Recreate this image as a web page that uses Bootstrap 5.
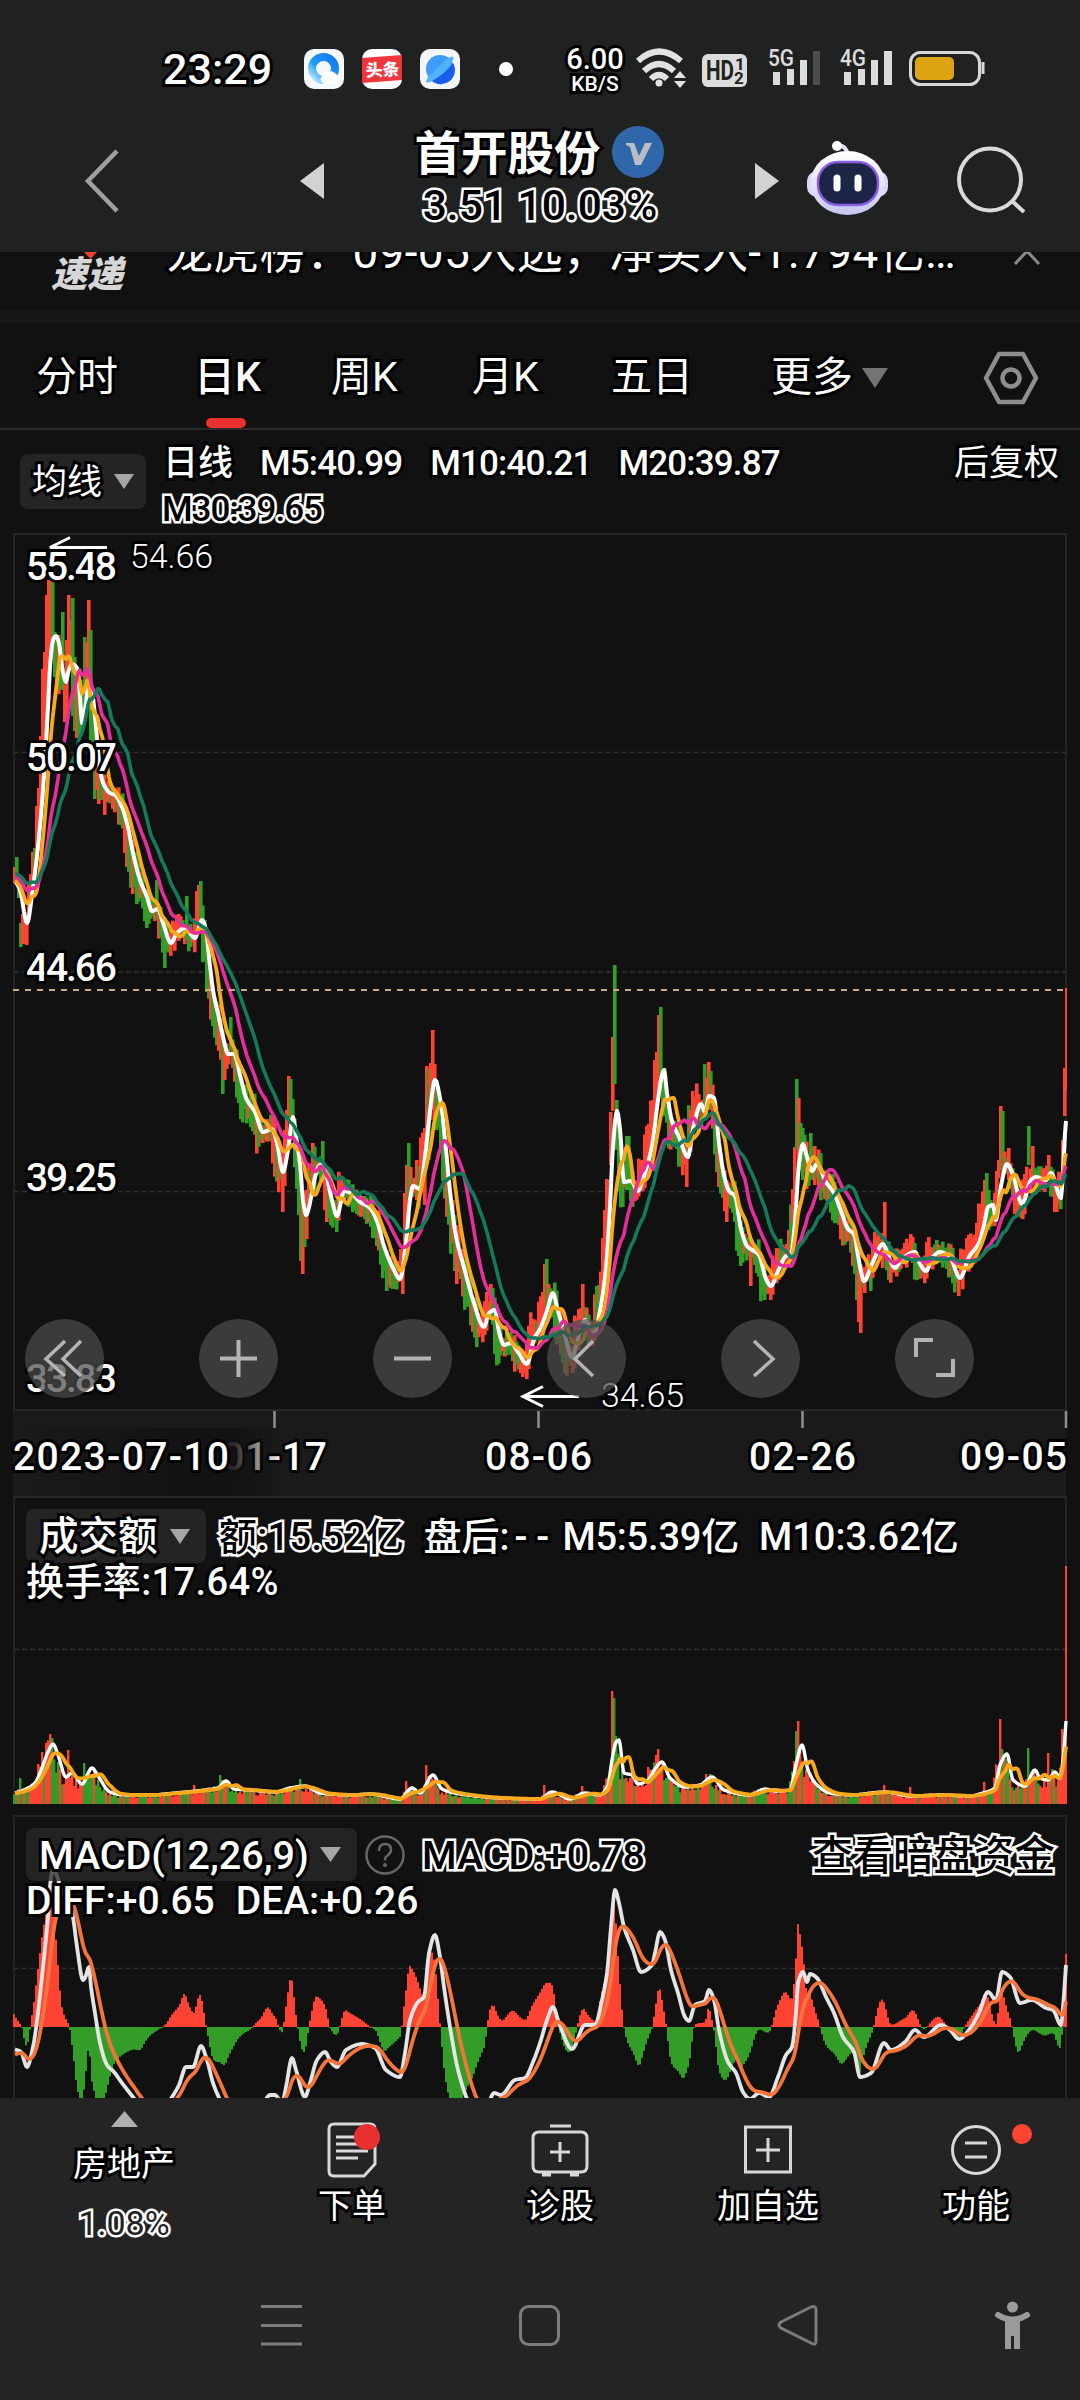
<!DOCTYPE html>
<html lang="zh-CN">
<head>
  <meta charset="UTF-8" />
  <title>首开股份 日K</title>
  <meta name="viewport" content="width=device-width, initial-scale=1" />
  <link href="https://cdn.jsdelivr.net/npm/bootstrap@5.3.0/dist/css/bootstrap.min.css" rel="stylesheet" />
  <style>
    body {
      width: 1080px;
      height: 2400px;
      overflow: hidden;
      background: #111;
      color: #fff;
      font-family: Roboto, "Noto Sans CJK SC", sans-serif;
      font-weight: 500;
      line-height: 1;
      white-space: nowrap;
    }
    svg { display: block; flex: none; }

    /* white text with black rim, and the inverted version */
    .ink { color: #fff; -webkit-text-stroke: 6px #000; paint-order: stroke fill; }
    .ghost { color: #000; -webkit-text-stroke: 5px #fff; paint-order: stroke fill; }
    svg .ink { fill: #fff; stroke: #000; stroke-width: 6px; stroke-linejoin: round; -webkit-text-stroke: 0; }

    .topbar { height: 252px; background: #202221; }
    .statusbar { height: 120px; padding: 18px 0 0 163px; }
    .clock { font-size: 43px; width: 141px; }
    .speed { width: 68px; text-align: center; font-size: 29px; margin: 1px 0 0 48px; }
    .speed small { display: block; font-size: 21px; line-height: 20px; }
    .titlebar { height: 132px; }
    .stock-name { font-size: 46.5px; font-weight: 700; }
    .stock-quote { font-size: 42.5px; }

    .news { height: 58px; background: #111; overflow: hidden; }
    .news-logo { width: 80px; margin-left: 51px; font-size: 36px; font-weight: 900; font-style: italic; color: #d6d6d6; padding-top: 5px; }
    .news-text { font-size: 46px; letter-spacing: .35px; font-weight: 400; width: 808px; margin: -23px 0 0 36px; }
    .divider-band { height: 13px; background: #171717; }

    .tabs { height: 107px; display: grid; grid-template-columns: 158px 137px 141px 139px 160px 211px 100px; padding-left: 36px; border-bottom: 2px solid #2b2b2b; font-size: 41px; font-weight: 400; }
    .tabs > div { position: relative; display: flex; align-items: center; padding-top: 4px; }
    .tabs .on { font-weight: 500; }
    .tabs .on::after { content: ""; position: absolute; left: 12px; bottom: 0; width: 40px; height: 10px; border-radius: 5px; background: #e83030; }

    .chip { background: #242424; border-radius: 8px; height: 54px; gap: 12px; }
    .chip > span { padding-top: 2px; }
    .ma-row { height: 102px; padding: 10px 20px 0; font-size: 35px; }
    .legend-layer { font-size: 38px; }
    .lt { letter-spacing: -.85px; }

    .round-tools { left: 25px; top: 787px; gap: 95px; }
    .round-tools > div { width: 79px; height: 79px; border-radius: 50%; background: rgba(76, 76, 76, .72); }

    .bottom-area { height: 302px; background: #242424; }
    .menu-row { height: 182px; display: grid; grid-template-columns: 248px 208px 208px 208px 208px; font-size: 34px; font-weight: 400; }
    .menu-row > div { position: relative; display: flex; flex-direction: column; align-items: center; }
    .reddot { position: absolute; border-radius: 50%; background: #e83030; }
    .sysnav { height: 120px; padding-left: 261px; }
  </style>
</head>
<body>
  <header class="topbar">
    <div class="statusbar d-flex align-items-center">
      <div class="clock ink">23:29</div>
      <div class="d-flex" style="gap: 18px">
        <svg width="40" height="40" viewBox="0 0 40 40">
          <defs><linearGradient id="ring" x1="1" y1="0" x2="0" y2="1"><stop offset="0" stop-color="#1478f0"/><stop offset=".6" stop-color="#1f9cf5"/><stop offset="1" stop-color="#c6ecff"/></linearGradient></defs>
          <rect width="40" height="40" rx="10" fill="#f4f8ff"/>
          <circle cx="19.500" cy="19.500" r="11.500" fill="none" stroke="url(#ring)" stroke-width="8"/>
          <path d="M20 35a5 5 0 0 1-1-9 8 8 0 0 1 13-1 5.500 5.500 0 0 1 0 10z" fill="#fff"/>
        </svg>
        <svg width="40" height="40" viewBox="0 0 40 40">
          <rect width="40" height="40" rx="10" fill="#fff"/>
          <path d="M0 9 40 6V31L0 34z" fill="#f0363c"/>
          <text x="3.500" y="27" font-size="17" font-weight="900" fill="#fff" transform="rotate(-3 20 20)">头条</text>
        </svg>
        <svg width="40" height="40" viewBox="0 0 40 40">
          <rect width="40" height="40" rx="10" fill="#f3f5f8"/>
          <circle cx="20" cy="20" r="14" fill="#3d9cf9"/>
          <path d="M11 31C22 27 31 18 33 14a14 14 0 0 1-22 17z" fill="#1a5cec"/>
          <path d="M28 9Q35 5 33 11 28 22 17 29 8 35 6 33L8 28z" fill="#52b2fb"/>
        </svg>
      </div>
      <svg width="14" height="14" style="margin-left: 39px"><circle cx="7" cy="7" r="7" fill="#fff"/></svg>
      <div class="speed ink">6.00<small>KB/S</small></div>
      <!-- wifi, HD, signals, battery -->
      <svg width="360" height="50" viewBox="633 44 360 50" style="margin-left: 3px">
        <g fill="none" stroke="#e2e2e2" stroke-width="6">
          <path d="M639 61Q660 42 682 61M645 71Q660 57 675 71M652 79Q660 71 668 79"/>
        </g>
        <circle cx="660" cy="83" r="3.500" fill="#e2e2e2"/>
        <path d="M675 78l6-7 6 7zM675 81l6 7 6-7z" fill="#e2e2e2"/>
        <rect x="703" y="54" width="45" height="33" rx="6" fill="#dcdcdc"/>
        <g fill="#202221" font-weight="700">
          <text x="707" y="80" font-size="27" textLength="28" lengthAdjust="spacingAndGlyphs">HD</text>
          <text x="736" y="70" font-size="17">1</text><text x="735" y="84" font-size="17">2</text>
        </g>
        <g fill="#dcdcdc" font-size="23" font-weight="500">
          <text x="769" y="66" textLength="26" lengthAdjust="spacingAndGlyphs">5G</text>
          <text x="841" y="66" textLength="26" lengthAdjust="spacingAndGlyphs">4G</text>
          <path d="M774 72h7v13h-7zM788 69h7v16h-7zM801 60h7v25h-7zM845 72h7v13h-7zM859 69h7v16h-7zM872 60h7v25h-7zM885 51h8v34h-8z"/>
          <path d="M814 51h7v34h-7z" fill="#4c4e4d"/>
        </g>
        <rect x="911.500" y="52.500" width="69" height="32" rx="10" fill="none" stroke="#d8d8d8" stroke-width="3"/>
        <rect x="916" y="57" width="39" height="23" rx="5" fill="#dea414"/>
        <path d="M984 62v12" stroke="#d8d8d8" stroke-width="3"/>
      </svg>
    </div>
    <div class="titlebar d-flex">
      <svg width="400" height="132" viewBox="0 120 400 132">
        <path d="M117 151 88 181 117 211" fill="none" stroke="#a0a0a0" stroke-width="4.500"/>
        <path d="M300 181 324 163V199z" fill="#d2d2d2"/>
      </svg>
      <div class="d-flex flex-column align-items-center" style="width: 280px">
        <div class="d-flex align-items-center" style="gap: 11px; margin-right: 2px; height: 64px">
          <span class="stock-name ink" style="padding-top: 5px">首开股份</span>
          <svg width="52" height="52" viewBox="0 0 52 52"><circle cx="26" cy="26" r="26" fill="#3067ab"/><path d="M14 17h8l5 13 6-13h7L29 39h-6l-5-18-4-2z" fill="#b9bec5"/></svg>
        </div>
        <div class="stock-quote ghost" style="margin-top: 1px">3.51 10.03%</div>
      </div>
      <svg width="400" height="132" viewBox="680 120 400 132">
        <defs>
          <linearGradient id="head" x1="0" y1="0" x2="0" y2="1"><stop offset="0" stop-color="#fff"/><stop offset=".6" stop-color="#e2defa"/><stop offset="1" stop-color="#c3c6f0"/></linearGradient>
        </defs>
        <path d="M755 163 779 181 755 199z" fill="#d2d2d2"/>
        <path d="M847 154q0-8-9-9" fill="none" stroke="#e8e6f8" stroke-width="4"/>
        <circle cx="837" cy="146" r="5" fill="#fff"/>
        <rect x="807" y="171" width="81" height="26" rx="10" fill="#dcdaf2"/>
        <ellipse cx="847.500" cy="183" rx="37" ry="32" fill="url(#head)"/>
        <rect x="818" y="162" width="60" height="43" rx="20" fill="#1d2547" stroke="#8a5fe6" stroke-width="2.500"/>
        <path d="M837 178v10M858 178v10" stroke="#fff" stroke-width="7" stroke-linecap="round"/>
        <circle cx="990" cy="179.500" r="31" fill="none" stroke="#dadada" stroke-width="4"/>
        <path d="M1012 201 1024 212" stroke="#dadada" stroke-width="4"/>
      </svg>
    </div>
  </header>

  <div class="news d-flex">
    <div class="position-relative">
      <div class="news-logo">速递</div>
      <svg class="position-absolute" style="left: 84px; top: 0" width="13" height="7"><path d="M0 0h13L6.500 7z" fill="#f0412f"/></svg>
    </div>
    <div class="news-text ink">龙虎榜：09-05入选，净买入-1.794亿…</div>
    <svg width="30" height="16" class="ms-auto" style="margin-right: 38px"><path d="M3 12 15 -1 27 12" fill="none" stroke="#8a8a8a" stroke-width="3"/></svg>
  </div>
  <div class="divider-band"></div>

  <nav class="tabs">
    <div class="ink">分时</div>
    <div class="ink on">日K</div>
    <div class="ink">周K</div>
    <div class="ink">月K</div>
    <div class="ink">五日</div>
    <div class="ink" style="gap: 9px">更多<svg width="26" height="20"><path d="M0 0h26L13 20z" fill="#747474"/></svg></div>
    <div><svg width="58" height="54" viewBox="0 0 56 54"><path d="M16 3H40L53 27 40 51H16L3 27z" fill="none" stroke="#8e8e8e" stroke-width="4.500" stroke-linejoin="round"/><circle cx="28" cy="27" r="8.500" fill="none" stroke="#8e8e8e" stroke-width="4.500"/></svg></div>
  </nav>

  <div class="ma-row d-flex">
    <div class="chip d-flex align-items-center justify-content-center ink fw-normal" style="width: 126px; height: 55px; margin-top: 14px"><span>均线</span><svg width="20" height="15"><path d="M0 0h20L10 15z" fill="#a6a6a6"/></svg></div>
    <div style="margin-left: 17px">
      <div class="d-flex align-items-center" style="height: 46px; gap: 27px">
        <span class="ink">日线</span><span class="ink lt">M5:40.99</span><span class="ink lt" style="margin-left: 1px">M10:40.21</span><span class="ink lt">M20:39.87</span>
      </div>
      <div class="ghost" style="margin: 6px 0 0 -1px; letter-spacing: -1px">M30:39.65</div>
    </div>
    <div class="ms-auto ink fw-normal" style="margin-top: 6px; margin-right: 1px">后复权</div>
  </div>

  <main class="position-relative">
    <!-- the drawing keeps screen coordinates; it starts at y=532 -->
    <svg id="chart" width="1080" height="1566" viewBox="0 532 1080 1566">
      <defs>
        <linearGradient id="fade"><stop offset="0" stop-color="#1a1a1a"/><stop offset=".7" stop-color="#121212"/><stop offset=".82" stop-color="#121212" stop-opacity=".9"/><stop offset="1" stop-color="#121212" stop-opacity="0"/></linearGradient>
      </defs>
      <g fill="none" stroke="#242424" stroke-width="2">
        <path d="M14 1410V534H1066V1410z"/>
        <path d="M14 1497V1804M1066 1497V1804M14 2098V1816H1066V2098"/>
      </g>
      <g stroke="#303030" stroke-width="1.300" stroke-dasharray="5 3">
        <path d="M14 752.500H1066M14 972H1066M14 1191.500H1066M14 1649.500H1066M14 1968.500H1066"/>
      </g>
      <g id="candles"></g>
      <g id="averages"></g>
      <path d="M13 990H1066" stroke="#c8aa7d" stroke-width="2" stroke-dasharray="6 6"/>
      <g id="volume"></g>
      <g id="macd"></g>

      <rect x="13" y="1411" width="1053" height="85" fill="#1a1a1a"/>
      <path d="M13 1410H1067M13 1497H1067" stroke="#262626" stroke-width="2"/>
      <path d="M274.500 1411v17M538.500 1411v17M802.500 1411v17M1066 1411v17" stroke="#8e8e8e" stroke-width="2.500"/>
      <g font-size="39" class="ink">
        <text x="222" y="1470" textLength="105">01-17</text>
        <rect x="13" y="1428" width="270" height="68" fill="url(#fade)" stroke="none"/>
        <text x="13" y="1470" textLength="216">2023-07-10</text>
        <text x="485" y="1470" textLength="107">08-06</text>
        <text x="749" y="1470" textLength="107">02-26</text>
        <text x="960" y="1470" textLength="107">09-05</text>
      </g>
      <g font-size="39" class="ink">
        <text x="26" y="580" textLength="91">55.48</text>
        <text x="26" y="771" textLength="91">50.07</text>
        <text x="26" y="981" textLength="91">44.66</text>
        <text x="26" y="1191" textLength="91">39.25</text>
        <text x="26" y="1392" textLength="91">33.83</text>
      </g>
      <g font-size="34" font-weight="300" class="ink">
        <text x="130" y="568" textLength="83">54.66</text>
        <text x="601" y="1407" textLength="83">34.65</text>
      </g>
      <g stroke="#fff" stroke-width="3" fill="none">
        <path d="M107 547.500H50L70 537.500"/>
        <path d="M579 1396.500H523M543 1386.500 523 1396.500 543 1406.500"/>
      </g>
    </svg>

    <div class="round-tools position-absolute d-flex">
      <div><svg viewBox="0 0 79 79"><path d="M40 22 21 40 40 57M56 22 38 40 56 57" fill="none" stroke="#b4b4b4" stroke-width="3.500"/></svg></div>
      <div><svg viewBox="0 0 79 79"><path d="M21 39.500H58M39.500 21V58" stroke="#b4b4b4" stroke-width="4"/></svg></div>
      <div><svg viewBox="0 0 79 79"><path d="M21 39.500H58" stroke="#b4b4b4" stroke-width="4"/></svg></div>
      <div><svg viewBox="0 0 79 79"><path d="M46 22 28 40 46 57" fill="none" stroke="#b4b4b4" stroke-width="3.500"/></svg></div>
      <div><svg viewBox="0 0 79 79"><path d="M33 22 52 40 33 57" fill="none" stroke="#b4b4b4" stroke-width="3.500"/></svg></div>
      <div><svg viewBox="0 0 79 79"><path d="M38 21H21V38M58 40V56H41" fill="none" stroke="#b4b4b4" stroke-width="4"/></svg></div>
    </div>

    <div class="legend-layer position-absolute" style="left: 26px; top: 977px">
      <div class="d-flex align-items-center">
        <div class="chip d-flex align-items-center ink" style="width: 180px; padding-left: 13px; font-size: 39.5px"><span>成交额</span><svg width="20" height="15"><path d="M0 0h20L10 15z" fill="#a6a6a6"/></svg></div>
        <span class="ghost" style="margin-left: 13px; padding-top: 2px; letter-spacing: .3px">额:15.52亿</span>
        <span class="ink" style="margin-left: 19px; padding-top: 2px; width: 139px">盘后:<span style="letter-spacing: 9px; margin-left: 5px">--</span></span>
        <span class="ink" style="padding-top: 2px; letter-spacing: -.2px">M5:5.39亿</span>
        <span class="ink" style="margin-left: 20px; padding-top: 2px">M10:3.62亿</span>
      </div>
      <div class="ink" style="letter-spacing: .4px">换手率:17.64%</div>
    </div>

    <div class="legend-layer position-absolute" style="left: 26px; top: 1296px; width: 1029px">
      <div class="d-flex align-items-center">
        <div class="chip d-flex align-items-center ink" style="width: 331px; height: 53px; padding-left: 13px; gap: 11px; font-size: 39.5px; background: rgba(42, 42, 42, .75)"><span>MACD(12,26,9)</span><svg width="21" height="15"><path d="M0 0h21L10.500 15z" fill="#a6a6a6"/></svg></div>
        <svg width="40" height="40" viewBox="0 0 40 40" style="margin-left: 8px"><circle cx="20" cy="20" r="18.500" fill="none" stroke="#666" stroke-width="2.500"/><path d="M14 16q0-7 6-7t6 6q0 3-4 6-2 1-2 4.500" fill="none" stroke="#666" stroke-width="2.500"/><circle cx="20" cy="30" r="2" fill="#666"/></svg>
        <span class="ghost" style="margin-left: 17px; padding-top: 2px; font-size: 39.5px">MACD:+0.78</span>
        <span class="ghost ms-auto" style="padding-top: 3px; font-size: 40.5px">查看暗盘资金</span>
      </div>
      <div class="d-flex" style="gap: 21px; margin-top: 1px; font-size: 39px"><span class="ink">DIFF:+0.65</span><span class="ink">DEA:+0.26</span></div>
    </div>
  </main>

  <footer class="bottom-area">
    <div class="menu-row">
      <div>
        <svg width="27" height="16" style="margin-top: 13px"><path d="M13.500 0 27 16H0z" fill="#b0b0b0"/></svg>
        <span class="ink" style="margin-top: 20px">房地产</span>
        <span class="ghost" style="margin-top: 25px; color: #222">1.08%</span>
      </div>
      <div>
        <svg width="50" height="56" viewBox="0 0 50 56" style="margin-top: 24px"><path d="M7 2H43Q48 2 48 7V42L37 54H7Q2 54 2 49V7Q2 2 7 2zM9 15H36M9 22H32M9 29H41M9 36H31" fill="none" stroke="#d8d8d8" stroke-width="3"/></svg>
        <span class="reddot" style="left: 106px; top: 26px; width: 26px; height: 26px"></span>
        <span class="ink" style="margin-top: 11px">下单</span>
      </div>
      <div>
        <svg width="58" height="54" viewBox="0 0 58 54" style="margin-top: 26px"><path d="M8 8H50Q56 8 56 14V42Q56 48 50 48H8Q2 48 2 42V14Q2 8 8 8zM19 2H40M29 18V38M19 28H39M11 51H20M39 51H48" fill="none" stroke="#d8d8d8" stroke-width="3"/></svg>
        <span class="ink" style="margin-top: 11px">诊股</span>
      </div>
      <div>
        <svg width="48" height="54" viewBox="0 0 48 54" style="margin-top: 26px"><path d="M1.500 3H46.500V48H1.500zM24 14V38M12 26H36" fill="none" stroke="#d8d8d8" stroke-width="3"/></svg>
        <span class="ink" style="margin-top: 11px">加自选</span>
      </div>
      <div>
        <svg width="52" height="54" viewBox="0 0 52 54" style="margin-top: 26px"><circle cx="26" cy="26" r="23.500" fill="none" stroke="#d8d8d8" stroke-width="3"/><path d="M15 19H37M15 33H37" stroke="#d8d8d8" stroke-width="3"/></svg>
        <span class="reddot" style="left: 140px; top: 26px; width: 20px; height: 20px; background: #ff4433"></span>
        <span class="ink" style="margin-top: 11px">功能</span>
      </div>
    </div>
    <div class="sysnav">
      <svg width="780" height="50" viewBox="261 2300 780 50" style="margin-top: 20px">
        <g fill="none" stroke="#7c7c7c" stroke-width="3">
          <path d="M261 2306.500H302M261 2325.500H302M261 2344H302"/>
          <rect x="520.500" y="2306.500" width="38" height="38" rx="8"/>
          <path d="M781 2322 811 2307Q816 2305 816 2310V2341Q816 2346 811 2343L781 2328Q777 2325 781 2322z"/>
        </g>
        <circle cx="1012.500" cy="2307" r="5.500" fill="#9a9a9a"/>
        <path d="M998 2315Q1012.500 2324 1027 2315" stroke="#9a9a9a" stroke-width="6" stroke-linecap="round" fill="none"/>
        <path d="M1005 2318h15v31h-6v-13h-3v13h-6z" fill="#9a9a9a"/>
      </svg>
    </div>
  </footer>

  <script src="https://cdn.jsdelivr.net/npm/bootstrap@5.3.0/dist/js/bootstrap.bundle.min.js"></script>
  <script>
    const RED = "#ff4332", GREEN = "#339d28";

    // "x,y x,y ..." -> [[x, y], ...]
    const parse = s => s.trim().split(/\s+/).map(p => p.split(",").map(Number));

    const ma5 = parse(`-60,868 -20,868 0,876 10,882 15,882 20,890 27,923 33,887 38,847 42,803 45,760 48,707 50,667 53,640 56,636 59,643 62,667 66,682 68,673 72,664 77,668 80,697 82,723 86,703 88,688 92,693 96,727 100,770 104,785 110,793 115,795 122,807 128,827 133,853 140,880 147,897 152,911 158,909 163,923 171,943 177,933 185,928 195,938 202,920 206,930 209,957 213,990 219,1018
      224,1041 228,1054 234,1054 241,1079 246,1098 255,1112 263,1132 272,1129 277,1143 283,1172 288,1150 293,1117 296,1136 300,1164 303,1200 306,1215 312,1193 315,1177 320,1165 325,1171 331,1196 337,1216 344,1191 351,1193 360,1202 370,1208 377,1221 384,1246 393,1268 400,1279 406,1243 410,1200 413,1186 420,1189 425,1157 430,1111 435,1080 441,1104 446,1150 451,1200 456,1236 465,1271 473,1300 484,1327 489,1313 495,1310 499,1332 504,1345 511,1343 518,1352 527,1364 534,1339
      540,1329 547,1311 553,1293 557,1307 564,1332 572,1357 578,1339 585,1320 594,1334 600,1311 606,1268 610,1207 613,1146 617,1111 620,1129 624,1182 631,1181 638,1191 643,1179 652,1146 658,1100 662,1075 664,1070 667,1093 672,1121 679,1137 688,1157 693,1129 701,1104 705,1112 709,1096 714,1098 719,1143 724,1175 729,1191 735,1196 741,1229 747,1246 759,1255 766,1279 771,1286 778,1271 786,1256 791,1254 795,1221 799,1164 803,1144 807,1157 812,1171 817,1164 826,1182 834,1193 841,1211 848,1229 854,1234 859,1261 864,1281 872,1264 883,1244 888,1255 895,1268 902,1259 915,1252 920,1264 926,1271 933,1257 940,1252 950,1257 960,1278 969,1257 979,1243 984,1225 988,1207 993,1205 996,1220 1001,1186 1007,1164 1013,1175 1022,1204 1031,1180 1036,1177 1046,1180 1051,1173 1061,1198 1063,1171 1066,1121 1072,1100`);

    const vol5 = parse(`-60,1795 -20,1795 14,1793 28,1788 35,1783 42,1768 48,1752 53,1744 58,1755 66,1777 72,1773 82,1784 92,1768 98,1776 110,1792 125,1795 150,1795 175,1793 205,1790 218,1788 226,1781 234,1789 250,1790 275,1792 290,1788 305,1786 320,1793 350,1795 370,1794 400,1799 412,1788 420,1793 433,1775 442,1789 460,1794 500,1798 540,1799 552,1792 570,1799 585,1793 600,1795 608,1785 612,1760 616,1742 619,1740 624,1773 632,1775 638,1784 648,1780 655,1769 662,1762 670,1778 685,1787 700,1785 712,1777 724,1790 750,1795 765,1789 775,1791 790,1790 796,1765 802,1745 808,1770 816,1784 830,1793 850,1795 885,1792 910,1796 940,1795 970,1796 983,1793 995,1788 1000,1765 1007,1754 1013,1780 1025,1786 1035,1770 1040,1778 1048,1780 1055,1772 1060,1778 1063,1760 1066,1721`);

    const diff = parse(`14,2049 21,2052 27,2067 33,2047 38,2013 43,1967 48,1917 51,1877 53,1870 57,1876 62,1893 69,1899 73,1917 77,1947 83,1980 85,1978 89,1967 91,1987 95,2013 100,2043 107,2065 114,2072 122,2083 133,2097 143,2109 155,2109 165,2106 172,2097 179,2085 186,2067 193,2067 201,2046 207,2060 213,2083 220,2100 226,2114 235,2118 248,2118 260,2110 270,2095 275,2095 282,2103 286,2087 292,2058 296,2070 305,2097 310,2083 317,2060 325,2052 331,2062 337,2067 346,2050 362,2044 375,2048 386,2070 400,2077 405,2053 410,2020 418,2002 424,1997 429,1953 435,1935 440,1957 444,1987 451,2033 458,2070 467,2099 475,2116 484,2121 490,2100 494,2093 501,2095 515,2080 525,2078 533,2062
      540,2043 547,2020 553,2007 559,2023 572,2049 585,2025 595,2025 602,2000 607,1973 611,1927 615,1890 619,1903 624,1927 633,1950 641,1972 652,1965 655,1953 660,1932 665,1940 671,1970 678,1993 685,2017 689,2021 695,2005 705,2001 709,1990 714,2000 719,2030 728,2062 736,2073 743,2092 750,2099 759,2093 769,2097 778,2077 786,2055 792,2047 796,2013 798,1983 803,1972 807,1982 810,1974 817,1978 826,1997 834,2013 843,2037 854,2052 860,2077 871,2073 884,2043 891,2050 905,2042 915,2030 924,2037 941,2025 950,2030 959,2039 969,2030 979,2013 988,1992 996,2000 1002,1972 1010,1977 1020,2003 1032,2000 1046,2008 1053,2010 1061,2025 1063,2007 1066,1965`);

    // candles whose extremes matter: x: [high, low, up?]
    const wicks = {
      14:[867,883,1],16:[857,884,0],18:[885,898,0],20:[923,947,0],22:[914,944,1],24:[912,944,1],26:[918,945,1],28:[884,920,1],30:[874,905,1],32:[852,885,1],34:[848,880,0],36:[806,860,1],38:[788,850,1],40:[736,820,1],42:[669,800,1],44:[652,780,1],46:[595,740,1],48:[580,700,1],50:[579,650,1],52:[582,640,0],54:[632,677,0],56:[640,690,0],58:[635,694,1],60:[650,690,0],62:[612,690,0],64:[685,722,1],66:[640,722,1],68:[595,670,1],70:[620,665,1],72:[598,716,0],74:[657,731,0],76:[680,738,1],78:[690,738,0],80:[680,735,0],82:[690,725,0],84:[637,700,0],86:[642,690,1],88:[600,690,1],90:[630,740,0],92:[690,745,0],94:[720,799,0],96:[740,790,1],98:[765,804,1],100:[765,800,0],102:[770,800,0],104:[775,815,1],
      156:[880,920,0],164:[925,968,0],186:[896,940,0],196:[891,930,1],200:[881,920,0],198:[885,925,1],206:[940,992,0],222:[1030,1094,0],224:[1049,1080,1],230:[1017,1050,0],282:[1150,1212,1],284:[1130,1186,1],286:[1110,1150,1],288:[1076,1116,1],290:[1079,1120,0],292:[1099,1140,0],298:[1160,1215,0],300:[1180,1261,0],302:[1190,1274,1],304:[1200,1247,0],306:[1190,1239,1],312:[1143,1190,1],322:[1141,1180,0],336:[1200,1232,0],386:[1250,1291,0],392:[1270,1289,0],402:[1250,1294,1],404:[1193,1250,1],406:[1165,1230,1],408:[1143,1200,0],410:[1167,1196,1],416:[1160,1200,1],424:[1128,1205,1],426:[1066,1165,1],428:[1069,1160,0],430:[1063,1120,1],432:[1030,1110,1],434:[1064,1120,1],436:[1080,1130,0],452:[1200,1243,1],454:[1215,1271,0],490:[1284,1320,1],520:[1350,1373,1],522:[1355,1377,1],
      544:[1264,1320,1],546:[1259,1310,0],570:[1345,1366,0],572:[1345,1373,1],582:[1284,1330,1],602:[1238,1300,1],604:[1210,1290,1],606:[1179,1260,1],608:[1180,1230,1],610:[1112,1165,1],612:[1037,1111,1],614:[965,1084,0],616:[1100,1150,0],626:[1136,1190,0],628:[1136,1190,0],654:[1060,1130,1],656:[1052,1110,1],658:[1015,1090,1],660:[1007,1079,0],662:[1075,1105,0],686:[1140,1187,1],692:[1091,1130,1],704:[1064,1110,0],706:[1078,1110,1],708:[1062,1105,1],710:[1071,1110,0],726:[1180,1222,1],740:[1220,1266,0],750:[1240,1286,1],794:[1147,1200,1],796:[1079,1150,0],798:[1098,1170,1],800:[1123,1170,0],802:[1128,1180,0],810:[1133,1180,0],814:[1146,1185,1],856:[1250,1300,0],858:[1250,1322,1],860:[1265,1333,1],870:[1260,1291,0],884:[1202,1250,1],910:[1234,1256,1],928:[1237,1265,1],958:[1270,1296,1],984:[1180,1225,1],986:[1173,1220,0],988:[1190,1230,0],998:[1160,1178,1],1000:[1106,1170,1],1002:[1111,1175,0],1008:[1148,1180,1],1014:[1180,1214,1],1028:[1126,1165,0],1032:[1146,1178,1],1048:[1155,1180,1],1054:[1180,1212,1],1056:[1182,1212,1],1060:[1182,1209,0],1062:[1140,1170,1],1064:[1068,1116,1],1066:[988,1090,1]
    };
    const volPeaks = {20:[1778,0],38:[1764,1],42:[1752,1],46:[1743,1],50:[1734,1],52:[1738,0],58:[1762,0],68:[1750,1],84:[1763,0],94:[1770,1],194:[1785,1],220:[1775,0],222:[1780,0],300:[1779,0],406:[1781,1],426:[1765,1],428:[1776,0],544:[1785,1],582:[1786,1],610:[1770,1],612:[1691,1],614:[1698,0],648:[1767,1],656:[1755,1],658:[1749,1],706:[1774,1],710:[1774,0],794:[1761,1],796:[1731,0],798:[1721,1],884:[1785,1],910:[1787,1],984:[1782,1],998:[1766,1],1000:[1719,1],1002:[1749,0],1004:[1757,1],1028:[1748,0],1048:[1753,1],1052:[1769,0],1062:[1729,1],1064:[1739,1],1066:[1566,1]};

    const slopeOf = (pts, i) => (pts[i][1] - pts[i - 1][1]) / (pts[i][0] - pts[i - 1][0]);

    // tangent at a point: flat on a peak or a trough, harmonic mean elsewhere
    function tangent(pts, i) {
      if (i === 0) return slopeOf(pts, 1);
      if (i === pts.length - 1) return slopeOf(pts, i);
      const a = slopeOf(pts, i), b = slopeOf(pts, i + 1);
      return a * b <= 0 ? 0 : 2 * a * b / (a + b);
    }

    function at(pts, x) {
      let i = 1;
      while (i < pts.length - 1 && pts[i][0] < x) i++;
      const [x0, y0] = pts[i - 1], [x1, y1] = pts[i];
      const w = x1 - x0, t = Math.min(1, Math.max(0, (x - x0) / w));
      const t2 = t * t, t3 = t2 * t;
      return (2 * t3 - 3 * t2 + 1) * y0 + (t3 - 2 * t2 + t) * w * tangent(pts, i - 1)
        + (3 * t2 - 2 * t3) * y1 + (t3 - t2) * w * tangent(pts, i);
    }

    // average of n five-day means, each five bars (10px) further back
    const mean = (pts, x, n) => {
      let s = 0;
      for (let k = 0; k < n; k++) s += at(pts, x - k * 10);
      return s / n;
    };

    let seed = 11;
    const rnd = () => (seed = (seed * 16807) % 2147483647) / 2147483647;

    const bar = (x, top, bottom, up, w = 2) =>
      `<rect x="${x - 1}" y="${top.toFixed(1)}" width="${Math.min(w, 1068 - x)}" height="${Math.max(1, bottom - top).toFixed(1)}" fill="${up ? RED : GREEN}"/>`;

    function line(fn, colour, width) {
      let d = "";
      for (let x = 15; x <= 1066; x += 1) d += (d ? "L" : "M") + x + " " + fn(x).toFixed(1);
      return `<path d="${d}" fill="none" stroke="${colour}" stroke-width="${width}" stroke-linejoin="round"/>`;
    }

    // price
    let out = "";
    for (let x = 14; x <= 1066; x += 2) {
      if (wicks[x]) { out += bar(x, ...wicks[x], 3.6); continue; }
      const y = at(ma5, x + 4), slope = at(ma5, x + 6) - at(ma5, x);
      const size = 9 + Math.min(16, Math.abs(slope) * .7);
      const up = rnd() < (slope < -3 ? .82 : slope > 3 ? .3 : .5);
      out += bar(x, y - size * (.4 + rnd() * .9), y + size * (.4 + rnd() * .9), up, 3.6);
    }
    document.getElementById("candles").innerHTML = out;
    document.getElementById("averages").innerHTML =
      line(x => at(ma5, x), "#fff", 4) +
      line(x => mean(ma5, x, 2), "#f9a91c", 3.8) +
      line(x => mean(ma5, x, 4), "#e52e9b", 3.6) +
      line(x => mean(ma5, x, 6), "#147a5b", 3.6);

    // turnover
    out = "";
    for (let x = 14; x <= 1066; x += 2) {
      const p = volPeaks[x];
      const h = (1804 - at(vol5, x + 3)) * (.65 + rnd() * .5);
      const rising = at(ma5, x + 6) < at(ma5, x);
      out += p ? bar(x, p[0], 1804, p[1], 2.4) : bar(x, 1804 - h, 1804, rnd() < (rising ? .8 : .48), 2.4);
    }
    out += line(x => at(vol5, x), "#fff", 3.4) + line(x => mean(vol5, x, 2), "#f9a91c", 3.8);
    document.getElementById("volume").innerHTML = out;

    // MACD: DEA is the 9-bar EMA of DIFF, bars are twice the gap
    out = "";
    let dea = 2057;
    const deaPts = [];
    for (let x = 14; x <= 1066; x += 2) {
      const v = at(diff, x);
      dea += (v - dea) * .2;
      deaPts.push([x, dea]);
      const h = (dea - v) * 2;
      out += h > 0 ? bar(x, 2027 - h, 2027, 1) : bar(x, 2027, 2027 - h, 0);
    }
    out += line(x => at(diff, x), "#e4e4e4", 3.8) + line(x => at(deaPts, x), "#f4743b", 3.8);
    document.getElementById("macd").innerHTML = out;
  </script>
</body>
</html>
